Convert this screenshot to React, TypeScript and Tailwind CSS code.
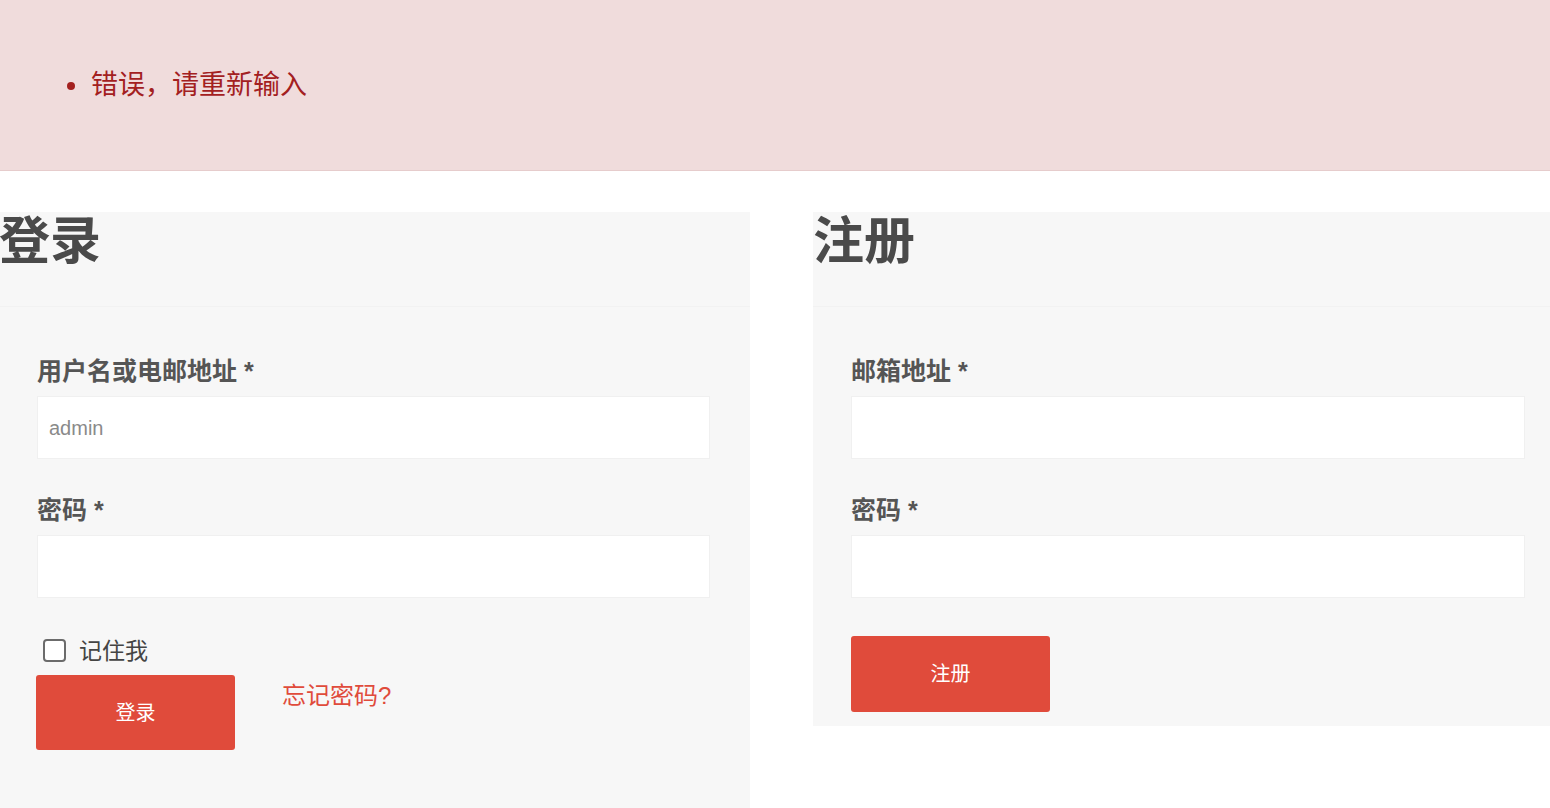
import React from "react";

const cjk = { fontFamily: '"Liberation Sans", "Noto Sans CJK SC", sans-serif' };

function Field({ label, value }: { label: string; value?: string }) {
  return (
    <div className="flex flex-col">
      <label className="text-[25px] leading-[32px] font-bold text-[#555555]">
        {label} <span className="font-bold">*</span>
      </label>
      <div className="mt-[9px] h-[63px] bg-white border border-[#f0f0f0] flex items-center px-[11px]">
        {value ? <span className="text-[20px] text-[#8a8a8a]">{value}</span> : null}
      </div>
    </div>
  );
}

export default function App() {
  return (
    <div className="w-[1550px] h-[808px] overflow-hidden bg-white" style={cjk}>
      {/* error banner */}
      <div className="h-[171px] bg-[#f0dcdc] border-b border-[#e6cccc] flex items-center">
        <ul className="pl-[67px]">
          <li className="flex items-center text-[27px] text-[#a3201f]">
            <span className="w-[8px] h-[8px] rounded-full bg-[#a3201f] mr-[16px] mt-[2px]"></span>
            错误，请重新输入
          </li>
        </ul>
      </div>

      <div className="mt-[41px] flex items-start gap-[63px]">
        {/* login */}
        <div className="w-[750px] h-[700px] bg-[#f7f7f7] flex flex-col">
          <div className="h-[95px] border-b border-[#f2f2f2] pt-[4px]">
            <h2 className="text-[51px] leading-none font-bold text-[#4a4a4a] -ml-[1px]">登录</h2>
          </div>
          <div className="pl-[36px] pr-[40px] pt-[48px] flex flex-col">
            <div className="pl-[1px]">
              <Field label="用户名或电邮地址" value="admin" />
            </div>
            <div className="mt-[35px] pl-[1px]">
              <Field label="密码" />
            </div>
            <div className="mt-[38px] h-[28px] flex items-center pl-[7px]">
              <span className="w-[23px] h-[23px] rounded-[4px] border-2 border-[#6b6b6b] bg-white"></span>
              <span className="ml-[13px] text-[23px] text-[#444444] mt-[3px]">记住我</span>
            </div>
            <div className="mt-[11px] flex items-start">
              <button className="w-[199px] h-[75px] rounded-[3px] bg-[#e04b3b] text-white text-[20px]">
                登录
              </button>
              <a className="ml-[47px] mt-[3px] text-[24px] text-[#e04b3b]">忘记密码?</a>
            </div>
          </div>
        </div>

        {/* register */}
        <div className="flex-1 bg-[#f7f7f7] flex flex-col pb-[14px]">
          <div className="h-[95px] border-b border-[#f2f2f2] pt-[4px]">
            <h2 className="text-[51px] leading-none font-bold text-[#4a4a4a]">注册</h2>
          </div>
          <div className="pl-[38px] pr-[25px] pt-[48px] flex flex-col">
            <Field label="邮箱地址" />
            <div className="mt-[35px]">
              <Field label="密码" />
            </div>
            <div className="mt-[38px]">
              <button className="w-[199px] h-[76px] rounded-[3px] bg-[#e04b3b] text-white text-[20px]">
                注册
              </button>
            </div>
          </div>
        </div>
      </div>
    </div>
  );
}
